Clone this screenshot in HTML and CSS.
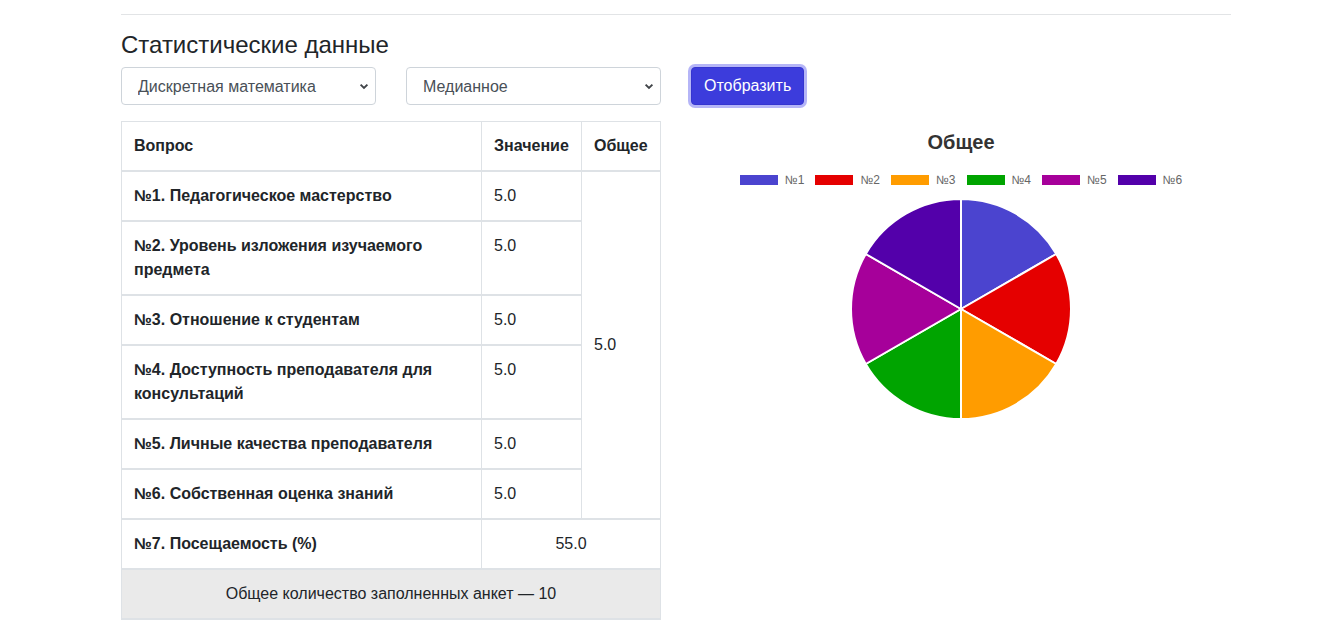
FILE: index.html
```html
<!DOCTYPE html>
<html lang="ru">
<head>
<meta charset="utf-8">
<title>Статистические данные</title>
<link rel="stylesheet" href="styles.css">
</head>
<body>
<div class="page">
  <hr class="rule">
  <h2 class="title">Статистические данные</h2>
  <div class="controls">
    <select class="select"><option>Дискретная математика</option></select>
    <select class="select"><option>Медианное</option></select>
    <button class="btn">Отобразить</button>
  </div>
  <div class="content">
    <table class="stats">
      <colgroup><col class="c1"><col class="c2"><col class="c3"></colgroup>
      <thead>
        <tr><th>Вопрос</th><th>Значение</th><th>Общее</th></tr>
      </thead>
      <tbody>
        <tr><th>№1. Педагогическое мастерство</th><td>5.0</td><td rowspan="6" class="mid">5.0</td></tr>
        <tr><th>№2. Уровень изложения изучаемого предмета</th><td>5.0</td></tr>
        <tr><th>№3. Отношение к студентам</th><td>5.0</td></tr>
        <tr><th>№4. Доступность преподавателя для консультаций</th><td>5.0</td></tr>
        <tr><th>№5. Личные качества преподавателя</th><td>5.0</td></tr>
        <tr><th>№6. Собственная оценка знаний</th><td>5.0</td></tr>
        <tr><th>№7. Посещаемость (%)</th><td colspan="2" class="center">55.0</td></tr>
        <tr><td colspan="3" class="footer">Общее количество заполненных анкет — 10</td></tr>
      </tbody>
    </table>
    <div class="chart">
      <div class="chart-title">Общее</div>
      <div class="legend">
        <span class="item"><i class="box b1"></i>№1</span>
        <span class="item"><i class="box b2"></i>№2</span>
        <span class="item"><i class="box b3"></i>№3</span>
        <span class="item"><i class="box b4"></i>№4</span>
        <span class="item"><i class="box b5"></i>№5</span>
        <span class="item"><i class="box b6"></i>№6</span>
      </div>
      <svg class="pie" width="224" height="224" viewBox="0 0 224 224">
        <g stroke="#fff" stroke-width="2" stroke-linejoin="round">
          <path fill="#4b44cf" d="M112 112 L112 2 A110 110 0 0 1 207.26 57 Z"/>
          <path fill="#e50000" d="M112 112 L207.26 57 A110 110 0 0 1 207.26 167 Z"/>
          <path fill="#ff9c00" d="M112 112 L207.26 167 A110 110 0 0 1 112 222 Z"/>
          <path fill="#00a400" d="M112 112 L112 222 A110 110 0 0 1 16.74 167 Z"/>
          <path fill="#a6009a" d="M112 112 L16.74 167 A110 110 0 0 1 16.74 57 Z"/>
          <path fill="#5300aa" d="M112 112 L16.74 57 A110 110 0 0 1 112 2 Z"/>
        </g>
      </svg>
    </div>
  </div>
</div>
</body>
</html>
```
FILE: styles.css
```css
html, body {
  margin: 0;
  padding: 0;
  background: #fff;
}
body {
  font-family: "Liberation Sans", Arial, sans-serif;
  font-size: 16px;
  line-height: 1.5;
  color: #212529;
}
.page {
  width: 1110px;
  margin-left: 121px;
}
.rule {
  margin: 14px 0 0;
  border: 0;
  border-top: 1px solid #e2e4e6;
  height: 0;
}
.title {
  margin: 15px 0 8px;
  font-size: 24px;
  font-weight: 500;
  line-height: 29px;
  color: #212529;
}
.controls {
  display: flex;
  align-items: center;
  height: 38px;
}
.select {
  appearance: none;
  -webkit-appearance: none;
  width: 255px;
  height: 38px;
  margin-right: 30px;
  padding: 0 30px 0 16px;
  font-family: "Liberation Sans", Arial, sans-serif;
  font-size: 16px;
  color: #495057;
  background-color: #fff;
  background-image: url("data:image/svg+xml,%3Csvg xmlns='http://www.w3.org/2000/svg' width='10' height='7' viewBox='0 0 10 7'%3E%3Cpath d='M1.6 1.6 L5 5 L8.4 1.6' fill='none' stroke='%23404448' stroke-width='1.9'/%3E%3C/svg%3E");
  background-repeat: no-repeat;
  background-position: right 6px center;
  background-size: 10px 7px;
  border: 1px solid #ced4da;
  border-radius: 4px;
}
.btn {
  height: 38px;
  padding: 0 12px;
  font-family: "Liberation Sans", Arial, sans-serif;
  font-size: 16px;
  color: #fff;
  background: #3c3cdc;
  border: 1px solid #3535d0;
  border-radius: 4px;
  box-shadow: 0 0 0 3px rgba(120, 120, 240, 0.55);
}
.content {
  display: flex;
  align-items: flex-start;
  margin-top: 16px;
  gap: 30px;
}
.stats {
  width: 539px;
  border-collapse: collapse;
  table-layout: fixed;
}
.c1 { width: 360px; }
.c2 { width: 100px; }
.c3 { width: 79px; }
.stats th, .stats td {
  padding: 12px;
  border: 1px solid #dee2e6;
  border-top-width: 2px;
  border-bottom-width: 2px;
  vertical-align: top;
  text-align: left;
  line-height: 24px;
}
.stats thead th {
  border-top-width: 1px;
}
.stats th {
  font-weight: 700;
}
.stats .mid {
  vertical-align: middle;
}
.stats .center {
  text-align: center;
}
.stats .footer {
  text-align: center;
  background: #eaeaea;
}
.chart {
  width: 541px;
  display: flex;
  flex-direction: column;
  align-items: center;
}
.chart-title {
  margin-top: 9px;
  font-size: 20px;
  font-weight: 700;
  line-height: 24px;
  color: #333;
}
.legend {
  display: flex;
  align-items: center;
  margin-top: 19px;
  height: 14px;
  font-size: 12px;
  line-height: 14px;
  color: #666;
}
.item {
  display: flex;
  align-items: center;
  margin-right: 11px;
}
.item:last-child {
  margin-right: 0;
}
.box {
  display: inline-block;
  width: 38px;
  height: 10px;
  margin-right: 7px;
}
.b1 { background: #4b44cf; }
.b2 { background: #e50000; }
.b3 { background: #ff9c00; }
.b4 { background: #00a400; }
.b5 { background: #a6009a; }
.b6 { background: #5300aa; }
.pie {
  display: block;
  margin-top: 10px;
}
```
